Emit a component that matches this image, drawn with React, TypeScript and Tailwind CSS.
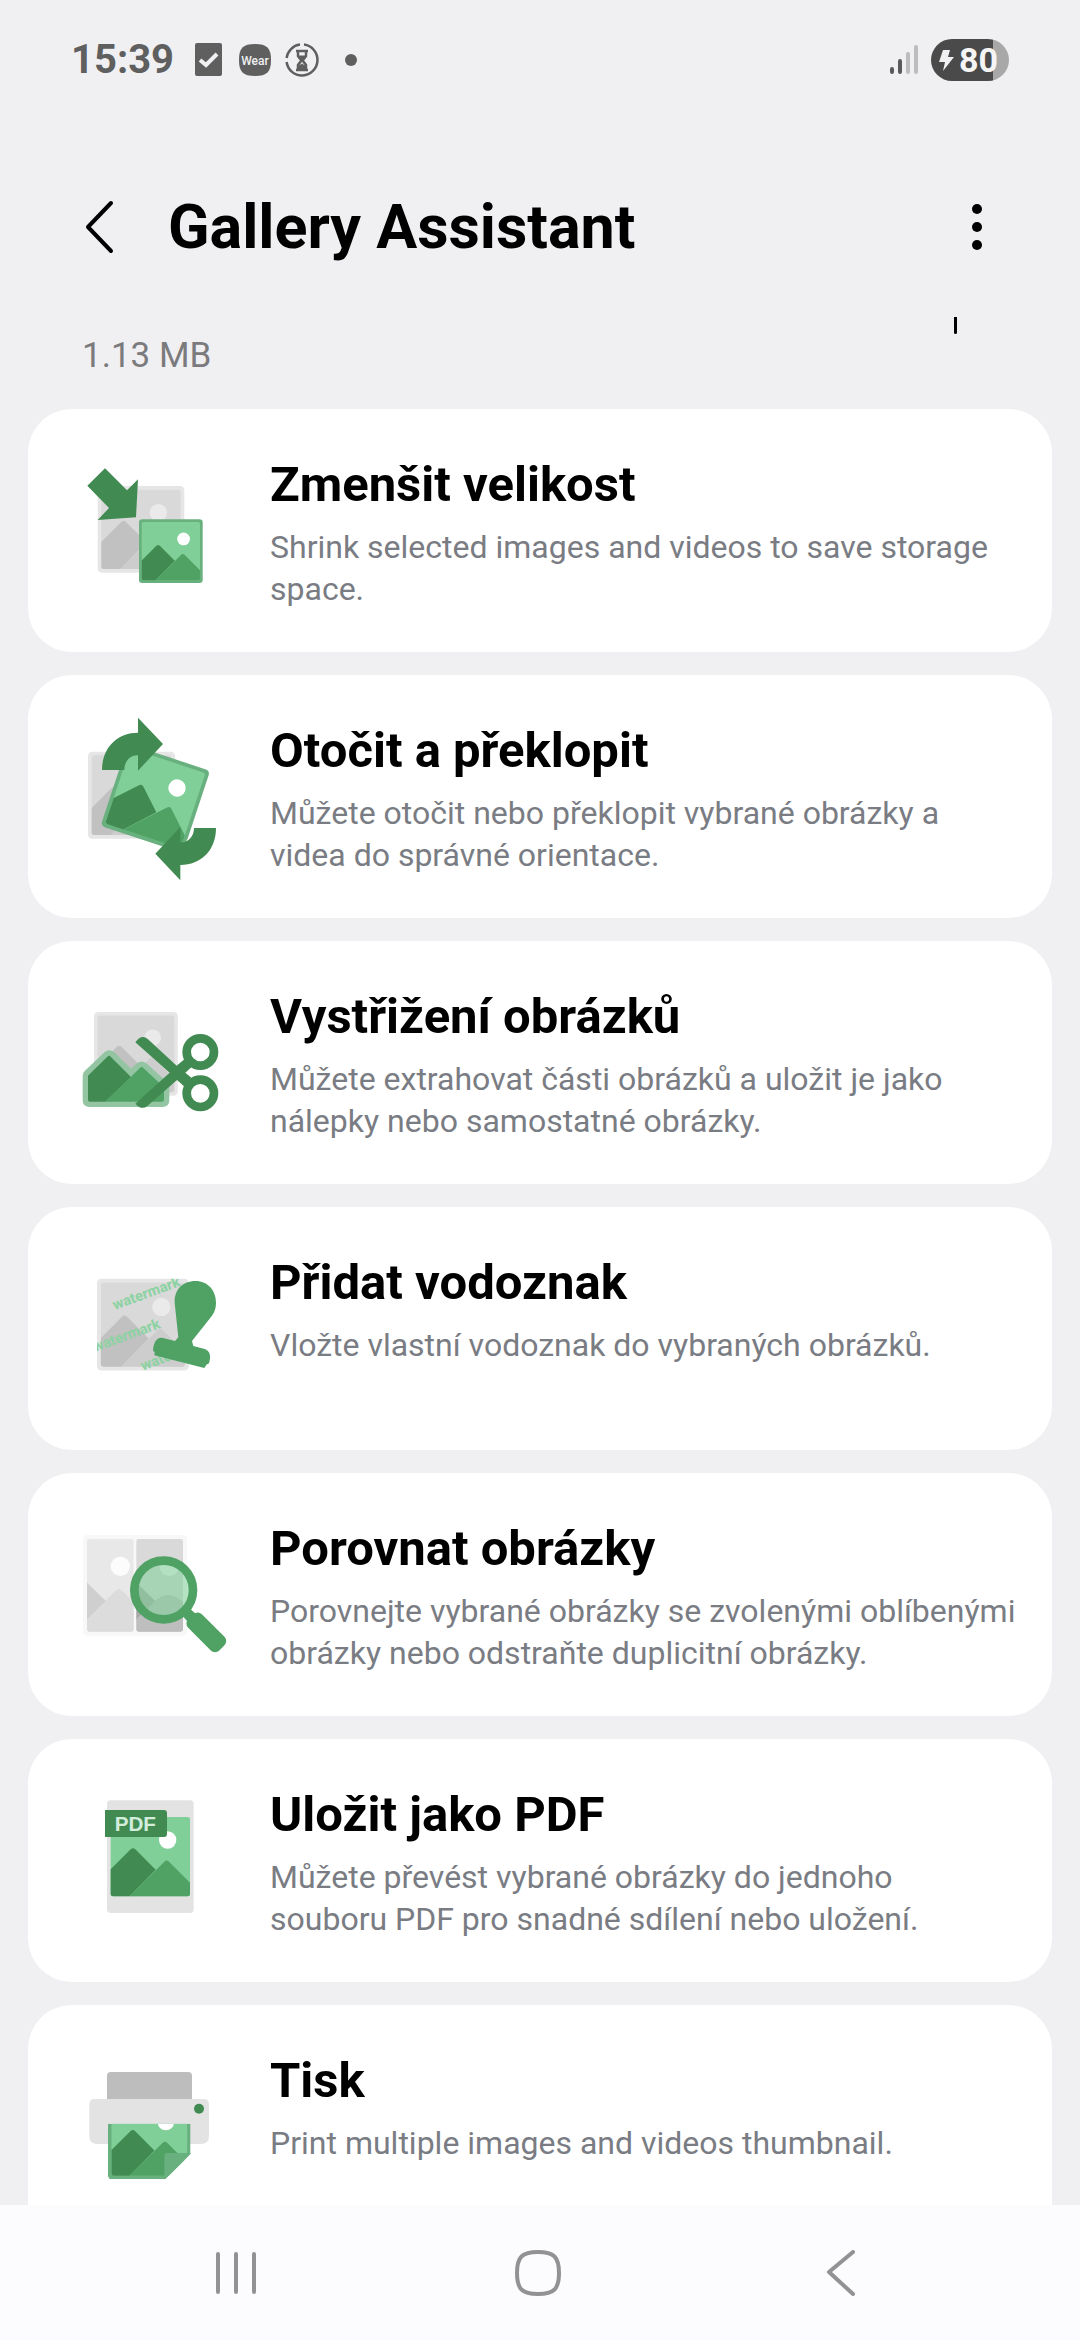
import React from "react";

type SceneProps = {
	transform: string;
	tone: "green" | "gray";
	frame?: boolean;
};

const tones = {
	green: { frame: "#69b07f", sky: "#80cf99", back: "#418b52", front: "#4fa264", sun: "#ffffff" },
	gray: { frame: "#e6e6e6", sky: "#d9d9d9", back: "#c1c1c1", front: "#cdcdcd", sun: "#eaeaea" },
};

// picture with two hills and a sun, drawn on a 260 x 260 grid
const Scene = ({ transform, tone, frame = true }: SceneProps) => {
	const c = tones[tone];
	return (
		<g transform={transform}>
			{frame && <rect width="260" height="260" rx="13" fill={c.frame} />}
			<rect x="11" y="11" width="238" height="238" rx="7" fill={c.sky} />
			<path d="M11 168 L71 108 Q78 101 85 108 L146 169 L68 249 H18 Q11 249 11 242 Z" fill={c.back} />
			<path d="M68 249 L172 145 Q179 138 186 145 L249 208 V242 Q249 249 242 249 Z" fill={c.front} />
			<circle cx="182" cy="80" r="26" fill={c.sun} />
		</g>
	);
};

const ResizeIcon = () => (
	<svg className="h-[170px] w-[150px] shrink-0" viewBox="60 15 450 510" aria-hidden="true">
		<Scene transform="translate(113 138)" tone="gray" />
		<path d="M82 137 L135 85 L201 151 L234 118 L228 232 L113 240 L147 204 Z" fill="#418b52" />
		<Scene transform="translate(237 238) scale(0.735)" tone="green" />
	</svg>
);

const RotateIcon = () => (
	<svg className="h-[170px] w-[150px] shrink-0" viewBox="60 33 450 510" aria-hidden="true">
		<Scene transform="translate(84 155) scale(1.005)" tone="gray" />
		<Scene transform="translate(286 295) rotate(18.3) translate(-130 -130)" tone="green" />
		<path d="M380 420 Q400 412 402 384 H415 V430 H380 Z" fill="#ffffff" />
		<path d="M126 210 C126 145 170 98 234 98 V53 L309 132 L234 212 V166 C210 166 193 184 193 210 Z" fill="#418b52" />
		<path d="M468 384 C468 450 424 495 361 495 V541 L286 461 L361 381 V428 C385 427 402 410 402 384 Z" fill="#418b52" />
	</svg>
);

const ClipIcon = () => (
	<svg className="h-[170px] w-[150px] shrink-0" viewBox="60 -9 450 510" aria-hidden="true">
		<Scene transform="translate(102 96) scale(0.967)" tone="gray" />
		<path
			d="M68 288 Q68 279 74 273 L134 216 Q148 205 162 216 L213 266 L231 250 Q245 239 259 250 L320 305 Q328 313 328 322 V360 Q328 381 307 381 H89 Q68 381 68 360 Z"
			fill="#93c5a3"
		/>
		<path d="M84 287 L142 230 Q147 225 152 230 L213 291 L136 365 H90 Q84 365 84 359 Z" fill="#418b52" />
		<path d="M136 365 L240 264 Q245 258 250 264 L312 322 V359 Q312 365 306 365 Z" fill="#4fa264" />
		<path d="M226 187 Q245 161 264 178 L350 257 L374 237 L394 262 L376 278 L394 293 L372 319 L351 300 L262 378 Q245 392 226 371 L329 278 Z" fill="#418b52" />
		<circle cx="421" cy="216" r="41" fill="#ffffff" stroke="#418b52" strokeWidth="26" />
		<circle cx="421" cy="340" r="41" fill="#ffffff" stroke="#418b52" strokeWidth="26" />
	</svg>
);

const WatermarkIcon = () => (
	<svg className="h-[170px] w-[150px] shrink-0" viewBox="60 -21 450 510" aria-hidden="true">
		<clipPath id="watermark-frame">
			<rect x="111" y="86" width="276" height="276" />
		</clipPath>
		<Scene transform="translate(111 86) scale(1.06)" tone="gray" />
		<g clipPath="url(#watermark-frame)" fill="#8ed2a4" className="font-['Roboto',sans-serif] text-[44px] font-extrabold">
			<text transform="translate(164 180) rotate(-20)">watermark</text>
			<text transform="translate(104 306) rotate(-20)">watermark</text>
			<text transform="translate(248 362) rotate(-20)">watermark</text>
		</g>
		<path
			d="M344 158 C342 120 368 93 406 93 C444 93 468 122 468 158 C468 180 460 192 450 205 L396 273 L400 288 L434 297 C452 303 453 320 447 340 L439 344 L433 354 L283 316 L284 306 L279 302 C281 276 290 262 306 263 L345 273 L355 262 Z"
			fill="#4fa264"
		/>
	</svg>
);

const CompareIcon = () => (
	<svg className="h-[170px] w-[150px] shrink-0" viewBox="60 -3 450 510" aria-hidden="true">
		<rect x="69" y="75" width="312" height="302" rx="13" fill="#f8f8f8" />
		<rect x="81" y="87" width="140" height="278" rx="7" fill="#e8e8e8" />
		<path d="M81 218 L140 275 L81 330 Z" fill="#cfcfcf" />
		<path d="M81 328 L168 241 Q176 233 184 241 L221 277 V358 Q221 365 214 365 H88 Q81 365 81 358 Z" fill="#dcdcdc" />
		<circle cx="181" cy="169" r="29" fill="#fcfcfc" />
		<rect x="229" y="87" width="140" height="278" rx="7" fill="#d9d9d9" />
		<path d="M229 218 L288 275 L229 330 Z" fill="#a8a8a8" />
		<path d="M229 328 L285 273 Q325 235 369 277 V358 Q369 365 362 365 H236 Q229 365 229 358 Z" fill="#bebebe" />
		<circle cx="328" cy="169" r="29" fill="#f4f4f4" />
		<path d="M388 294 L410 314 L386 338 L366 316 Z" fill="#4fa264" />
		<circle cx="311" cy="240" r="88" fill="#80cf99" fillOpacity="0.55" stroke="#4fa264" strokeWidth="26" />
		<rect x="373" y="338" width="132" height="58" rx="18" transform="rotate(45 439 367)" fill="#4fa264" />
	</svg>
);

const PdfIcon = () => (
	<svg className="h-[170px] w-[150px] shrink-0" viewBox="60 15 450 510" aria-hidden="true">
		<rect x="141" y="91" width="260" height="338" rx="11" fill="#e3e3e3" />
		<Scene transform="translate(141 130)" tone="green" frame={false} />
		<path d="M135 120 H312 Q321 120 321 129 V192 Q321 201 312 201 H135 Z" fill="#418b52" />
		<text x="164" y="184" fill="#d3ecdb" className="font-['Liberation_Sans',sans-serif] text-[62px] font-bold">
			PDF
		</text>
	</svg>
);

const PrintIcon = () => (
	<svg className="h-[170px] w-[150px] shrink-0" viewBox="60 3 450 510" aria-hidden="true">
		<clipPath id="print-sheet">
			<path d="M144 251 H392 V341 L315 418 H144 Z" />
		</clipPath>
		<rect x="141" y="96" width="255" height="100" rx="11" fill="#bdbdbd" />
		<path d="M88 193 Q88 177 104 177 H431 Q447 177 447 193 V288 Q447 312 423 312 H112 Q88 312 88 288 Z" fill="#e3e3e3" />
		<circle cx="417" cy="206" r="15" fill="#418b52" />
		<g clipPath="url(#print-sheet)">
			<Scene transform="translate(144 170) scale(0.954)" tone="green" />
			<path d="M313 420 V349 Q313 339 323 339 H394 V420 Z" fill="#69b07f" />
		</g>
	</svg>
);

const tools = [
	{ title: "Zmenšit velikost", text: "Shrink selected images and videos to save storage\nspace.", Icon: ResizeIcon },
	{ title: "Otočit a překlopit", text: "Můžete otočit nebo překlopit vybrané obrázky a\nvidea do správné orientace.", Icon: RotateIcon },
	{ title: "Vystřižení obrázků", text: "Můžete extrahovat části obrázků a uložit je jako\nnálepky nebo samostatné obrázky.", Icon: ClipIcon },
	{ title: "Přidat vodoznak", text: "Vložte vlastní vodoznak do vybraných obrázků.", Icon: WatermarkIcon },
	{ title: "Porovnat obrázky", text: "Porovnejte vybrané obrázky se zvolenými oblíbenými\nobrázky nebo odstraňte duplicitní obrázky.", Icon: CompareIcon },
	{ title: "Uložit jako PDF", text: "Můžete převést vybrané obrázky do jednoho\nsouboru PDF pro snadné sdílení nebo uložení.", Icon: PdfIcon },
	{ title: "Tisk", text: "Print multiple images and videos thumbnail.", Icon: PrintIcon },
];

const StatusBar = () => (
	<div className="flex h-[120px] shrink-0 items-center justify-between px-[71px] text-[#5f5f5f]">
		<div className="flex items-center">
			<span className="w-[124px] text-[40px] leading-[44px] font-bold">15:39</span>
			<svg width="27" height="34" viewBox="0 0 27 34" aria-hidden="true">
				<rect width="27" height="33" rx="2" fill="currentColor" />
				<path d="M5 17 L11 22 L22 11" fill="none" stroke="#f0f0f3" strokeWidth="4" />
			</svg>
			<svg className="ml-[17px]" width="32" height="32" viewBox="0 0 32 32" aria-hidden="true">
				<path d="M16 0 C28 0 32 4 32 16 C32 28 28 32 16 32 C4 32 0 28 0 16 C0 4 4 0 16 0 Z" fill="currentColor" />
				<text x="16" y="21" textAnchor="middle" fill="#f0f0f3" className="text-[12px] font-medium">
					Wear
				</text>
			</svg>
			<svg className="ml-[14px]" width="34" height="34" viewBox="0 0 34 34" fill="none" stroke="currentColor" strokeWidth="2.5" aria-hidden="true">
				<path d="M19 1.6 A15.5 15.5 0 1 1 1.6 19 M1.6 15 A15.5 15.5 0 0 1 15 1.6" />
				<path d="M11 8 H23 M11 27 H23" />
				<path d="M13 8 V13 L16 17 V18 L13 22 V27 M21 8 V13 L18 17 V18 L21 22 V27" />
				<path d="M14 13 H20 L17 17 Z" fill="currentColor" strokeWidth="1" />
				<path d="M14 26 V23 L17 21 L20 23 V26 Z" fill="currentColor" strokeWidth="1" />
			</svg>
			<span className="ml-[26px] size-3 rounded-full bg-[#5f5f5f]" />
		</div>
		<div className="flex items-center">
			<svg width="28" height="30" viewBox="0 0 28 30" strokeWidth="4" strokeLinecap="round" aria-hidden="true">
				<path d="M2 24 V27 M10 16 V27" stroke="#5a5a5a" />
				<path d="M18 9 V27 M26 2 V27" stroke="#bdbdbf" />
			</svg>
			<div className="ml-[13px] flex h-[42px] w-[78px] items-center overflow-hidden rounded-full bg-linear-to-r from-[#4a4a4a] from-80% to-[#a8a8a8] to-80% pl-2">
				<svg width="15" height="21" viewBox="0 0 15 21" fill="#f0f0f3" aria-hidden="true">
					<path d="M4 0 H11 L9 7 H15 L4 21 L6 12 H0 Z" />
				</svg>
				<span className="ml-[5px] text-[34px] leading-[42px] font-bold text-[#f5f5f5]">80</span>
			</div>
		</div>
	</div>
);

const NavBar = () => (
	<nav className="grid h-[135px] shrink-0 grid-cols-3 items-center justify-items-center bg-[#fcfcfe] pr-[88px] pl-[85px] text-[#929294]">
		<button type="button" aria-label="Recents" className="p-4">
			<svg width="40" height="46" viewBox="0 0 40 46" stroke="currentColor" strokeWidth="4" strokeLinecap="round">
				<path d="M2 4 V42 M20 4 V42 M38 4 V42" />
			</svg>
		</button>
		<button type="button" aria-label="Home" className="p-4">
			<svg width="46" height="46" viewBox="0 0 46 46" fill="none" stroke="currentColor" strokeWidth="4">
				<path d="M23 2 C39 2 44 7 44 23 C44 39 39 44 23 44 C7 44 2 39 2 23 C2 7 7 2 23 2 Z" />
			</svg>
		</button>
		<button type="button" aria-label="Back" className="p-4">
			<svg width="30" height="46" viewBox="0 0 30 46" fill="none" stroke="currentColor" strokeWidth="4" strokeLinecap="round" strokeLinejoin="round">
				<path d="M27 2 L3 22 L27 44" />
			</svg>
		</button>
	</nav>
);

const App = () => {
	return (
		<div className="flex h-screen flex-col bg-[#f0f0f3] font-['Roboto',sans-serif]">
			<StatusBar />
			<header className="relative flex h-[214px] shrink-0 items-center pr-[90px] pl-[84px]">
				<button type="button" aria-label="Navigate up">
					<svg width="32" height="54" viewBox="0 0 32 54" fill="none" stroke="#000" strokeWidth="4" strokeLinecap="round" strokeLinejoin="round">
						<path d="M27 3 L4 27 L27 51" />
					</svg>
				</button>
				<h1 className="ml-[52px] grow text-[61px] leading-[72px] font-bold text-black">Gallery Assistant</h1>
				<button type="button" aria-label="More options">
					<svg width="26" height="54" viewBox="0 0 26 54">
						<circle cx="13" cy="9" r="5" />
						<circle cx="13" cy="27" r="5" />
						<circle cx="13" cy="45" r="5" />
					</svg>
				</button>
				{/* scroll handle */}
				<span className="absolute right-[123px] bottom-0 h-[17px] w-[3px] rounded-b-sm bg-black" />
			</header>
			<main className="min-h-0 grow overflow-hidden">
				<p className="px-[82px] pb-[31px] text-[35px] leading-[44px] text-[#7b7b7d]">1.13 MB</p>
				<ul className="flex flex-col gap-[23px] px-7">
					{tools.map(({ title, text, Icon }) => (
						<li key={title}>
							<button type="button" className="flex min-h-[243px] w-full items-start rounded-[44px] bg-white pt-9 pr-7 pl-[52px] text-left">
								<Icon />
								<span className="ml-[40px] flex flex-col gap-[13px] pt-3">
									<span className="text-[49px] leading-[56px] font-bold text-black">{title}</span>
									<span className="text-[32px] leading-[42px] whitespace-pre-line text-[#7a7c83]">{text}</span>
								</span>
							</button>
						</li>
					))}
				</ul>
			</main>
			<NavBar />
		</div>
	);
};

export default App;
